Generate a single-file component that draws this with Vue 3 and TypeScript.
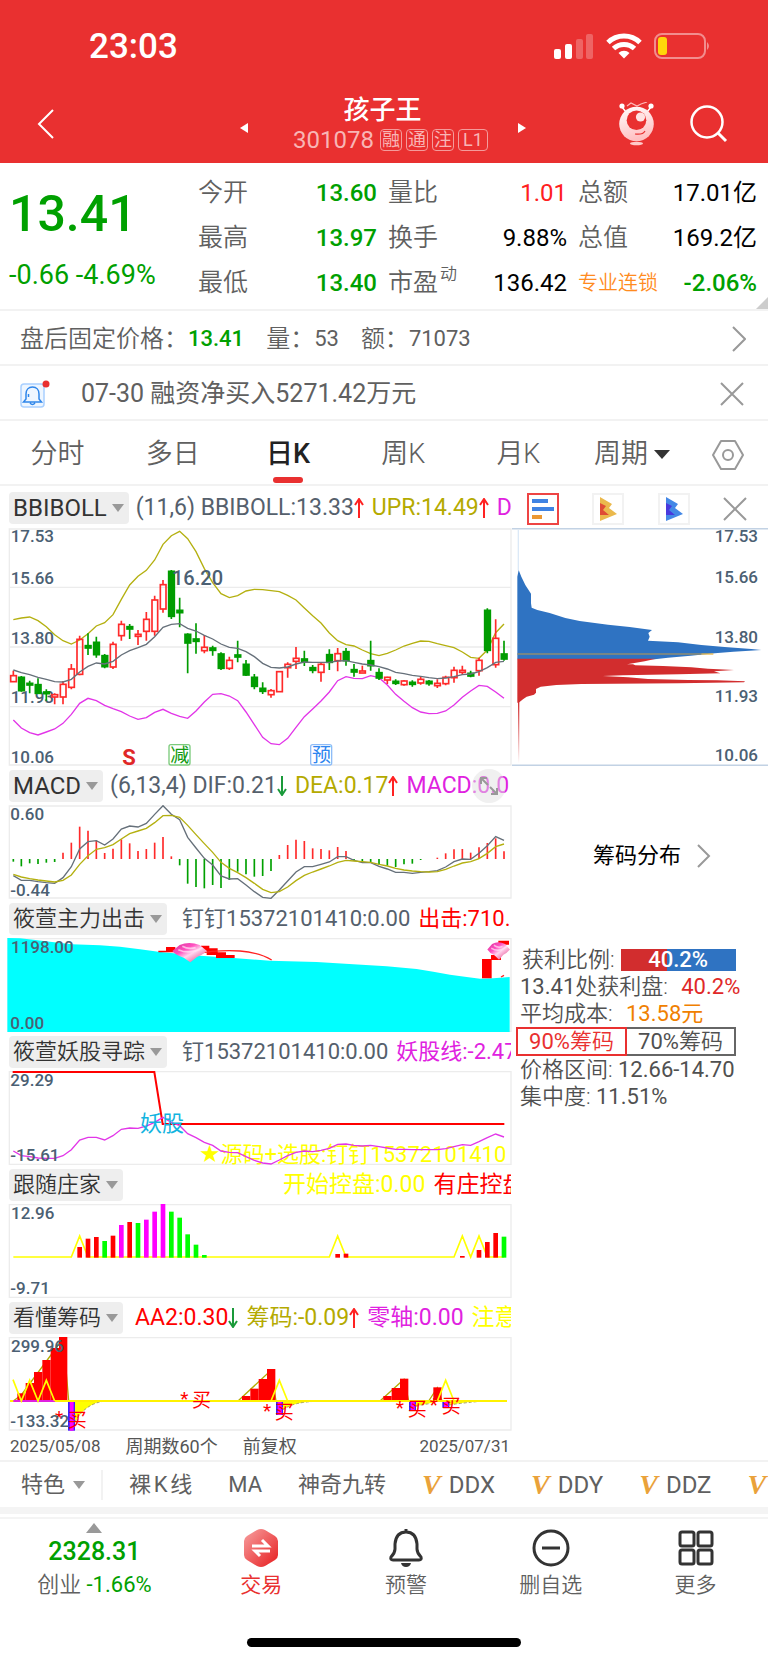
<script setup lang="ts">
import { ref } from 'vue'

type Tone = 'slate' | 'olive' | 'pink' | 'red' | 'yellow'
interface Reading { text: string; tone: Tone; trend?: 'up' | 'down' }
type Candle = [kind: 'r' | 'g', high: number, low: number, top: number, bottom: number]
type Bar = [slot: number, tone: 'r' | 'g' | 'm', top: number]

const periods = ['分时', '多日', '日K', '周K', '月K']
const activePeriod = ref('日K')
const chipRange = ref(90)

const stats = [
  { label: '今开', value: '13.60', tone: 'fall' },
  { label: '量比', value: '1.01', tone: 'rise' },
  { label: '总额', value: '17.01亿', tone: '' },
  { label: '最高', value: '13.97', tone: 'fall' },
  { label: '换手', value: '9.88%', tone: '' },
  { label: '总值', value: '169.2亿', tone: '' },
  { label: '最低', value: '13.40', tone: 'fall' },
  { label: '市盈', mark: '动', value: '136.42', tone: '' },
  { label: '专业连锁', sector: true, value: '-2.06%', tone: 'fall' },
]

const readings: Record<string, Reading[]> = {
  boll: [
    { text: '(11,6) BBIBOLL:13.33', tone: 'slate', trend: 'up' },
    { text: 'UPR:14.49', tone: 'olive', trend: 'up' },
    { text: 'D', tone: 'pink' },
  ],
  macd: [
    { text: '(6,13,4) DIF:0.21', tone: 'slate', trend: 'down' },
    { text: 'DEA:0.17', tone: 'olive', trend: 'up' },
    { text: 'MACD:0.0', tone: 'pink' },
  ],
  force: [
    { text: '钉钉15372101410:0.00', tone: 'slate' },
    { text: '出击:710.', tone: 'red' },
  ],
  hunt: [
    { text: '钉15372101410:0.00', tone: 'slate' },
    { text: '妖股线:-2.47', tone: 'pink' },
  ],
  follow: [
    { text: '开始控盘:0.00', tone: 'yellow' },
    { text: '有庄控盘', tone: 'red' },
  ],
  chips: [
    { text: 'AA2:0.30', tone: 'red', trend: 'down' },
    { text: '筹码:-0.09', tone: 'olive', trend: 'up' },
    { text: '零轴:0.00', tone: 'pink' },
    { text: '注意', tone: 'yellow' },
  ],
}

/* Chart units are thirds of a pixel at the base width. */
const slotX = (i: number) => Math.round(39.5 + 24.95 * i)
const line = (ys: number[]) => ys.map((y, i) => `${slotX(i)},${y}`).join(' ')

const upper = [299, 294, 291, 302, 320, 344, 362, 372, 360, 341, 318, 308, 284, 238, 195, 169, 151, 120, 73, 47, 34, 56, 95, 146, 188, 221, 233, 227, 213, 208, 209, 212, 215, 226, 240, 264, 287, 309, 339, 362, 374, 378, 390, 401, 407, 400, 390, 378, 370, 363, 364, 371, 377, 383, 396, 412, 415, 390, 338, 312]
const middle = [450, 458, 464, 472, 478, 485, 486, 478, 456, 439, 429, 432, 424, 405, 392, 383, 373, 350, 322, 313, 311, 325, 333, 346, 357, 372, 382, 385, 395, 410, 430, 442, 444, 441, 432, 426, 427, 427, 427, 423, 422, 427, 432, 435, 440, 447, 457, 461, 466, 469, 473, 476, 474, 470, 464, 462, 455, 443, 427, 424]
const lower = [600, 624, 638, 645, 636, 627, 610, 583, 550, 535, 542, 556, 566, 575, 588, 598, 593, 577, 568, 580, 589, 595, 573, 546, 523, 521, 528, 542, 576, 614, 652, 671, 674, 655, 622, 590, 567, 543, 516, 482, 470, 475, 476, 467, 473, 495, 523, 544, 563, 576, 581, 580, 573, 555, 532, 513, 496, 499, 516, 535]

const candles: Candle[] = [
  ['r', 452, 485, 467, 485], ['g', 468, 515, 472, 512], ['g', 482, 520, 490, 495], ['g', 475, 520, 494, 520],
  ['g', 508, 542, 516, 521], ['r', 520, 553, 524, 531], ['r', 483, 553, 493, 531], ['r', 432, 508, 447, 502],
  ['r', 347, 466, 358, 463], ['g', 340, 405, 377, 384], ['g', 350, 413, 367, 404], ['g', 402, 445, 407, 440],
  ['r', 365, 447, 373, 441], ['r', 302, 362, 313, 347], ['g', 312, 357, 320, 327], ['r', 330, 375, 343, 349],
  ['r', 276, 362, 298, 334], ['r', 227, 347, 240, 334], ['r', 180, 278, 194, 267], ['g', 150, 297, 154, 289],
  ['g', 233, 322, 271, 278], ['g', 340, 460, 343, 369], ['g', 310, 401, 357, 364], ['r', 345, 400, 382, 392],
  ['g', 377, 407, 384, 391], ['g', 397, 450, 402, 445], ['r', 410, 450, 421, 445], ['g', 362, 427, 405, 411],
  ['g', 420, 468, 433, 465], ['g', 462, 508, 472, 499], ['g', 487, 522, 505, 514], ['r', 507, 533, 512, 524],
  ['r', 455, 515, 455, 515], ['r', 427, 473, 433, 443], ['r', 381, 447, 415, 424], ['g', 392, 438, 417, 424],
  ['g', 435, 460, 443, 451], ['r', 427, 485, 433, 457], ['g', 388, 450, 404, 427], ['r', 384, 454, 401, 422],
  ['g', 384, 437, 395, 422], ['g', 432, 470, 449, 456], ['r', 437, 459, 453, 459], ['g', 362, 452, 422, 437],
  ['g', 445, 480, 458, 474], ['r', 470, 492, 472, 480], ['g', 478, 495, 484, 490], ['r', 480, 497, 483, 494],
  ['g', 481, 500, 487, 493], ['r', 470, 494, 478, 489], ['g', 480, 497, 484, 491], ['r', 478, 504, 490, 497],
  ['r', 467, 496, 472, 491], ['r', 440, 488, 451, 473], ['r', 437, 465, 451, 457], ['g', 452, 472, 460, 468],
  ['r', 413, 467, 421, 452], ['g', 265, 400, 271, 391], ['r', 298, 443, 355, 434], ['g', 362, 422, 402, 417],
]

const macdBars = [290, 304, 295, 297, 293, 291, 263, 233, 185, 197, 227, 264, 251, 223, 235, 258, 252, 233, 216, 274, 301, 356, 366, 370, 360, 369, 345, 320, 328, 335, 333, 318, 270, 240, 224, 228, 250, 252, 256, 246, 258, 287, 291, 294, 299, 302, 306, 298, 296, 285, 282, 278, 265, 253, 252, 263, 247, 234, 220, 259]
const dif = [332, 346, 346, 350, 353, 355, 338, 305, 252, 230, 227, 240, 222, 192, 183, 186, 175, 148, 122, 148, 164, 217, 249, 280, 300, 333, 342, 341, 360, 380, 397, 400, 375, 348, 321, 305, 305, 298, 291, 275, 275, 286, 293, 293, 304, 312, 322, 322, 325, 322, 320, 317, 306, 290, 282, 283, 265, 242, 215, 226]
const dea = [328, 336, 341, 345, 348, 351, 346, 330, 298, 272, 253, 248, 239, 222, 206, 198, 190, 173, 152, 151, 157, 181, 209, 236, 262, 292, 310, 323, 338, 355, 373, 383, 380, 366, 347, 331, 321, 312, 303, 292, 286, 288, 290, 292, 298, 303, 310, 315, 318, 320, 321, 320, 313, 303, 294, 290, 281, 265, 245, 237]
const hunt = [348, 362, 365, 369, 370, 370, 362, 344, 315, 307, 307, 315, 302, 283, 279, 280, 273, 262, 247, 262, 272, 296, 308, 322, 331, 348, 352, 353, 365, 376, 384, 387, 375, 362, 352, 348, 350, 346, 340, 328, 327, 331, 333, 331, 335, 339, 343, 343, 344, 344, 344, 344, 341, 335, 329, 331, 320, 308, 297, 306]

const followBars: Bar[] = [
  [8, 'r', 636], [9, 'r', 611], [10, 'r', 606], [11, 'g', 618], [12, 'r', 602], [13, 'm', 570], [14, 'r', 561], [15, 'g', 564],
  [16, 'm', 554], [17, 'm', 530], [18, 'm', 506], [19, 'g', 530], [20, 'g', 548], [21, 'g', 598], [22, 'g', 629], [23, 'g', 660],
  [39, 'r', 657], [40, 'r', 656], [54, 'r', 663], [56, 'r', 645], [57, 'r', 621], [58, 'r', 594], [59, 'g', 605],
]
const followPeaks = [8, 39, 54, 56]
const followLine = line(Array.from({ length: 60 }, (_, i) => (followPeaks.includes(i) ? 603 : 666)))

const chipBars = [
  [1, 295], [2, 264], [3, 231], [4, 195], [5, 159], [6, 123],
  [28, 303], [29, 281], [30, 252], [31, 222],
  [45, 303], [46, 279], [47, 251], [51, 277],
]
const chipDrops = [[7, 407], [32, 360], [48, 348], [52, 338]]
const buys = [[165, 378, 203, 395], [541, 320, 576, 337], [789, 356, 824, 373], [1187, 347, 1223, 364], [1289, 338, 1325, 354]]

const extras = ['裸K线', 'MA', '神奇九转']
const premium = ['DDX', 'DDY', 'DDZ', '']
</script>

<template>
  <main class="app">
    <header class="top">
      <div class="status">
        <time class="clock">23:03</time>
        <svg class="status-icons" viewBox="0 0 160 28" width="160" height="28" aria-hidden="true">
          <g fill="#fff">
            <rect x="1" y="17" width="7" height="10" rx="2" />
            <rect x="12" y="12" width="7" height="15" rx="2" />
            <g opacity=".25">
              <rect x="23" y="7" width="7" height="20" rx="2" />
              <rect x="33" y="2" width="7" height="25" rx="2" />
            </g>
            <path d="M71 26.500l-5.500-5.500a8 8 0 0 1 11 0z" />
          </g>
          <path d="M55 10.500a23 23 0 0 1 32 0M60.500 16.500a15.500 15.500 0 0 1 21 0" fill="none" stroke="#fff" stroke-width="5" />
          <rect x="102" y="2" width="50" height="24" rx="7" fill="none" stroke="#f28d8e" stroke-width="2" />
          <path d="M154 10q4 4 0 8z" fill="#f28d8e" />
          <rect x="105" y="5" width="9" height="18" rx="3" fill="#ffd60a" />
        </svg>
      </div>
      <div class="title-bar">
        <button class="icon-btn" aria-label="返回">
          <svg width="18" height="30" viewBox="0 0 18 30"><path d="M16 1L2 15l14 14" fill="none" stroke="#fff" stroke-width="2" /></svg>
        </button>
        <div class="stock">
          <button class="icon-btn" aria-label="上一只"><svg width="8" height="12" viewBox="0 0 8 12"><path d="M8 1v10L0 6z" fill="#fff" /></svg></button>
          <div class="stock-name">
            <h1>孩子王</h1>
            <p class="code">301078 <span class="tag">融</span><span class="tag">通</span><span class="tag">注</span><span class="tag wide">L1</span></p>
          </div>
          <button class="icon-btn" aria-label="下一只"><svg width="8" height="12" viewBox="0 0 8 12"><path d="M0 1v10l8-5z" fill="#fff" /></svg></button>
        </div>
        <div class="actions">
          <button class="icon-btn" aria-label="智能助手">
            <svg width="38" height="44" viewBox="0 0 38 44">
              <defs><linearGradient id="bot" x2=".3" y2="1"><stop offset="0" stop-color="#fff" /><stop offset="1" stop-color="#ffc0c2" /></linearGradient></defs>
              <path d="M4 5l4 5M33 5l-4 5" fill="none" stroke="#fff" stroke-width="1.500" />
              <path d="M9 4l4-3 6 3 4-2 6-2" fill="none" stroke="#ffb9b9" stroke-width="1.200" />
              <circle cx="4" cy="4" r="2.600" fill="#fff" /><circle cx="33" cy="4" r="2.600" fill="#fff" />
              <circle cx="18.500" cy="22" r="17.300" fill="url(#bot)" />
              <circle cx="18.500" cy="18.300" r="9.800" fill="#e93030" />
              <circle cx="22.500" cy="15" r="4.600" fill="#ffe3e3" />
              <path d="M17 32q8 1 10-3" fill="none" stroke="#e93030" stroke-width="1.200" />
              <ellipse cx="18.500" cy="41.500" rx="6.500" ry="1.800" fill="#ffc9c9" />
            </svg>
          </button>
          <button class="icon-btn" aria-label="搜索">
            <svg width="38" height="38" viewBox="0 0 38 38"><circle cx="17" cy="17" r="15.500" fill="none" stroke="#fff" stroke-width="2.500" /><path d="M28 28l8 8" stroke="#fff" stroke-width="3" /></svg>
          </button>
        </div>
      </div>
    </header>

    <section class="quote">
      <div class="price">
        <strong>13.41</strong>
        <span>-0.66 -4.69%</span>
      </div>
      <dl class="stats">
        <div v-for="s in stats" :key="s.label">
          <dt :class="{ sector: s.sector }">{{ s.label }}<sup v-if="s.mark">{{ s.mark }}</sup></dt>
          <dd :class="s.tone">{{ s.value }}</dd>
        </div>
      </dl>
      <svg class="corner" width="12" height="12" viewBox="0 0 12 12" aria-hidden="true"><path d="M12 0v12H0z" fill="#ccc" /></svg>
    </section>

    <section class="row after">
      <span>盘后固定价格：</span><b class="fall">13.41</b>
      <span>量：</span><b>53</b>
      <span>额：</span><b>71073</b>
      <button class="icon-btn end" aria-label="展开"><svg width="14" height="26" viewBox="0 0 14 26"><path d="M1 1l12 12L1 25" fill="none" stroke="#999" stroke-width="2" /></svg></button>
    </section>

    <section class="row notice">
      <svg width="30" height="28" viewBox="0 0 30 28" aria-hidden="true">
        <rect x="1" y="4" width="23" height="23" rx="3" fill="#eef6ff" stroke="#a9d0ff" stroke-width="1.500" />
        <path d="M3.500 22h18l-2.500-3v-5c0-4-2.500-7-6.500-7S6 10 6 14v5zM10 23q2.500 3 5 0M8.500 17v-3" fill="none" stroke="#2f86ea" stroke-width="1.500" />
        <circle cx="26" cy="4" r="3.500" fill="#e93030" />
      </svg>
      <p>07-30 融资净买入5271.42万元</p>
      <button class="icon-btn end" aria-label="关闭"><svg width="24" height="24" viewBox="0 0 24 24"><path d="M1 1l22 22M23 1L1 23" stroke="#999" stroke-width="2" /></svg></button>
    </section>

    <nav class="periods" aria-label="周期">
      <button v-for="p in periods" :key="p" :class="{ active: p === activePeriod }" @click="activePeriod = p">{{ p }}</button>
      <button class="more-period">周期<svg width="16" height="9" viewBox="0 0 16 9" aria-hidden="true"><path d="M0 0h16L8 9z" fill="#333" /></svg></button>
      <button aria-label="设置"><svg width="32" height="30" viewBox="0 0 32 30"><path d="M9 1h14l8 14-8 14H9L1 15z" fill="none" stroke="#999" stroke-width="2" stroke-linejoin="round" /><circle cx="16" cy="15" r="5" fill="none" stroke="#999" stroke-width="2" /></svg></button>
    </nav>

    <section class="charts">
      <div class="left">
        <div class="head first">
          <button class="pick latin">BBIBOLL<i></i></button>
          <p class="vals boll">
            <span v-for="r in readings.boll" :key="r.text" :class="r.tone">{{ r.text }}<svg v-if="r.trend" :class="['arrow', r.trend]" width="10" height="20" viewBox="0 0 10 20"><path d="M5 20V1M1 7l4-6 4 6" /></svg></span>
          </p>
        </div>
        <svg class="plot" viewBox="0 24 1536 714" role="img" aria-label="日K线">
          <path d="M28 27H1533V735H28zM28 202H1533M28 381H1533M28 560H1533" class="frame" />
          <polyline :points="line(upper)" class="ln o" />
          <polyline :points="line(lower)" class="ln p" />
          <text class="axis" x="32" y="66">17.53</text>
          <text class="axis" x="32" y="192">15.66</text>
          <text class="axis" x="32" y="371">13.80</text>
          <text class="axis" x="32" y="549">11.93</text>
          <text class="axis" x="32" y="728">10.06</text>
          <g v-for="(c, i) in candles" :key="i" :class="c[0] === 'r' ? 'up-candle' : 'down-candle'">
            <path :d="`M${slotX(i)} ${c[1]}V${c[3]}M${slotX(i)} ${c[4]}V${c[2]}`" />
            <rect :x="slotX(i) - 8" :y="c[3]" width="17" :height="c[4] - c[3]" />
          </g>
          <polyline :points="line(middle)" class="ln s" />
          <text class="peak" x="516" y="194">16.20</text>
          <text class="sell" x="367" y="734">S</text>
          <g class="badge green"><rect x="507" y="674" width="63" height="61" rx="6" /><text x="511" y="725">减</text></g>
          <g class="badge blue"><rect x="932" y="674" width="63" height="61" rx="6" /><text x="936" y="725">预</text></g>
        </svg>

        <div class="head">
          <button class="pick latin">MACD<i></i></button>
          <p class="vals boll">
            <span v-for="r in readings.macd" :key="r.text" :class="r.tone">{{ r.text }}<svg v-if="r.trend" :class="['arrow', r.trend]" width="10" height="20" viewBox="0 0 10 20"><path d="M5 20V1M1 7l4-6 4 6" /></svg></span>
          </p>
          <button class="expand" aria-label="全屏"><svg width="20" height="20" viewBox="0 0 20 20"><path d="M2 8V2h6M3 3l6 6M18 12v6h-6M17 17l-6-6" fill="none" stroke="#999" stroke-width="2" /></svg></button>
        </div>
        <svg class="plot" viewBox="0 120 1536 282" role="img" aria-label="MACD">
          <path d="M28 123H1533V399H28z" class="frame" />
          <path v-for="(y, i) in macdBars" :key="i" :d="`M${slotX(i)} 282V${y}`" :stroke="y < 282 ? '#ff2a2a' : '#00a000'" stroke-width="5" />
          <polyline :points="line(dif)" class="ln s" />
          <polyline :points="line(dea)" class="ln o" />
          <text class="axis" x="31" y="166">0.60</text>
          <text class="axis" x="31" y="393">-0.44</text>
        </svg>

        <div class="head">
          <button class="pick">筱萱主力出击<i></i></button>
          <p class="vals force"><span v-for="r in readings.force" :key="r.text" :class="r.tone">{{ r.text }}</span></p>
        </div>
        <svg class="plot" viewBox="0 519 1536 282" role="img" aria-label="筱萱主力出击">
          <defs>
            <linearGradient id="gem" x2="1" y2="1"><stop offset="0" stop-color="#d8349a" /><stop offset=".35" stop-color="#ff4fc0" /><stop offset=".55" stop-color="#ffd6ef" /><stop offset="1" stop-color="#e0206f" /></linearGradient>
            <g id="diamond">
              <path d="M0 26L22 8Q50-4 82 8L104 26Q90 38 74 44L54 60L34 46Q10 38 0 26z" fill="url(#gem)" />
              <path d="M18 22q36 16 72-6M30 12q18 10 40 4" fill="none" stroke="#ffe6f6" stroke-width="5" opacity=".7" />
            </g>
          </defs>
          <path d="M22 521H1533V799H28" class="frame" />
          <path d="M22 519L60 520L100 524L150 530L215 538L300 541L360 545L420 553L475 560L600 572L700 579L810 587L950 591L1060 598L1160 604L1250 612L1300 620L1350 629L1400 636L1440 641L1480 640L1529 636V801H22z" fill="#0ff" />
          <path d="M475 557h23v-11h28v16h-51zM603 542h25v8h25v12h25v8h26v9h-56v-9h-28v-12h-17zM1446 582h27v-12h30v15h-28v55h-29zM1495 527h32v12h-32z" fill="red" />
          <path d="M580 567Q660 553 720 558T815 585M1503 636l9-5" fill="none" stroke="#f22" stroke-width="4" />
          <use href="#diamond" x="517" y="532" /><use href="#diamond" transform="translate(1462 530) scale(.65 .9)" />
          <text class="axis" x="33" y="564">1198.00</text>
          <text class="axis" x="31" y="791">0.00</text>
        </svg>

        <div class="head">
          <button class="pick">筱萱妖股寻踪<i></i></button>
          <p class="vals force"><span v-for="r in readings.hunt" :key="r.text" :class="r.tone">{{ r.text }}</span></p>
        </div>
        <svg class="plot" viewBox="0 108 1536 282" role="img" aria-label="筱萱妖股寻踪">
          <path d="M28 110H1533V388H28z" class="frame" />
          <text class="note ad" x="597" y="380"><tspan class="star">★</tspan>源码+选股:钉钉15372101410</text>
          <path d="M38 111H463L488 267H1513" fill="none" stroke="red" stroke-width="6" />
          <polyline :points="line(hunt)" class="ln p" />
          <text class="note cyan" x="420" y="288">妖股</text>
          <text class="axis" x="31" y="153">29.29</text>
          <text class="axis" x="31" y="379">-15.61</text>
        </svg>

        <div class="head">
          <button class="pick">跟随庄家<i></i></button>
          <p class="vals follow"><span v-for="r in readings.follow" :key="r.text" :class="r.tone">{{ r.text }}</span></p>
        </div>
        <svg class="plot" viewBox="0 507 1536 282" role="img" aria-label="跟随庄家">
          <path d="M28 509H1533V787H28z" class="frame" />
          <polyline :points="followLine" fill="none" stroke="#ff0" stroke-width="5" />
          <rect v-for="b in followBars" :key="b[0]" :x="slotX(b[0]) - 7" :y="b[2]" width="14" :height="668 - b[2]" :class="'bar-' + b[1]" />
          <text class="axis" x="33" y="552">12.96</text>
          <text class="axis" x="31" y="778">-9.71</text>
        </svg>

        <div class="head">
          <button class="pick">看懂筹码<i></i></button>
          <p class="vals chips">
            <span v-for="r in readings.chips" :key="r.text" :class="r.tone">{{ r.text }}<svg v-if="r.trend" :class="['arrow', r.trend]" width="10" height="20" viewBox="0 0 10 20"><path d="M5 20V1M1 7l4-6 4 6" /></svg></span>
          </p>
        </div>
        <svg class="plot" viewBox="0 126 1536 282" role="img" aria-label="看懂筹码">
          <path d="M28 128H1533V405H28z" class="frame" />
          <path d="M40 318L64 300L164 165L190 126L206 318M714 318L813 226L828 318M1140 318L1212 253L1226 318M1286 318L1312 278L1326 318" fill="none" stroke="#b4aa00" stroke-width="4" />
          <rect v-for="b in chipBars" :key="b[0]" :x="slotX(b[0]) - 12" :y="b[1]" width="25" :height="318 - b[1]" fill="red" />
          <path d="M224 318V382Q245 345 275 330T340 318M848 318V345Q865 332 890 326T960 318M1247 318V334Q1270 328 1326 318M1347 318V330Q1370 326 1430 318" fill="#ff0" />
          <path d="M224 382Q245 345 275 330T340 318M848 345Q865 332 890 326T960 318M1247 334Q1270 328 1290 326M1347 330Q1370 326 1430 320" fill="none" stroke="#a8a060" stroke-width="3" stroke-dasharray="9 6" />
          <path d="M30 318H1521" stroke="#fff200" stroke-width="6" />
          <path d="M40 318H165" stroke="#e020e0" stroke-width="6" />
          <g v-for="d in chipDrops" :key="d[0]"><rect :x="slotX(d[0]) - 10" y="321" width="21" :height="d[1] - 321" fill="#3a20ff" /><rect :x="slotX(d[0]) - 5" y="321" width="12" :height="d[1] - 321" fill="#f0f" /></g>
          <path d="M39 254L64 318L89 256L114 318L139 256L164 318M813 318L838 256L863 318M1312 318L1337 256L1362 318" fill="none" stroke="#ff0" stroke-width="5" />
          <g v-for="b in buys" :key="b[0]" class="buy"><text :x="b[0]" :y="b[1] + 10">*</text><text :x="b[2]" :y="b[3]">买</text></g>
          <text class="axis" x="33" y="170">299.96</text>
          <text class="axis" x="31" y="396">-133.32</text>
        </svg>
        <footer class="dates"><span>2025/05/08</span><span class="zh">周期数60个</span><span class="zh">前复权</span><span class="end">2025/07/31</span></footer>
      </div>

      <aside class="right">
        <div class="tools">
          <button class="tool on" aria-label="筹码"><svg width="24" height="24" viewBox="0 0 24 24"><path d="M1 4h16M1 12h22" stroke="#3f83e3" stroke-width="4" /><path d="M1 20h10" stroke="#eb9833" stroke-width="4" /></svg></button>
          <button class="tool" aria-label="成本"><svg width="18" height="24" viewBox="0 0 18 24"><path d="M1 0l12 7-3 4 8 6-17 7z" fill="#ebb94c" /><path d="M1 6l6 3-3 4 6 5H1z" fill="#df4c35" /></svg></button>
          <button class="tool" aria-label="变化"><svg width="18" height="24" viewBox="0 0 18 24"><path d="M1 0l12 7-3 4 8 6-17 7z" fill="#4488e6" /><path d="M1 6l6 3-3 4 6 5H1z" fill="#4939dd" /></svg></button>
          <button class="icon-btn" aria-label="关闭筹码"><svg width="24" height="24" viewBox="0 0 24 24"><path d="M1 1l22 22M23 1L1 23" stroke="#999" stroke-width="2" /></svg></button>
        </div>
        <svg class="plot" viewBox="12 144 768 714" role="img" aria-label="筹码分布">
          <defs><linearGradient id="tail" x2="0" y2="1"><stop offset="0" stop-color="#d22d2e" /><stop offset="1" stop-color="#d22d2e" stop-opacity="0" /></linearGradient></defs>
          <path d="M12 146H780M12 856H780" stroke="#c2d2e4" stroke-width="5" />
          <path d="M31 150V270" stroke="#dce9f7" stroke-width="4" />
          <rect x="30" y="664" width="4" height="186" fill="url(#tail)" />
          <path d="M28 290L32 270L40 290L52 315L69 341V370L71 383L88 390L125 399L172 414L215 423L300 434L365 441L432 450L421 459L425 470L420 482L510 487L580 495L650 501L730 507L760 510L676 515L620 520L548 527L480 533L440 538H28z" fill="#2f73c2" />
          <path d="M28 536H444L410 544L375 550L357 553H375L382 556L465 558L550 562L600 566L678 570L618 574L637 580L512 583L345 586L284 588L360 592L420 597L540 600L627 601L711 604L708 607L512 610L220 612L145 615L98 620L84 627V638L78 644L56 650L45 658L32 668H28z" fill="#d22d2e" />
          <path d="M28 522H580" stroke="#8f8d73" stroke-width="4" />
          <path d="M580 522H616" stroke="#e8b84a" stroke-width="4" />
          <text class="axis" x="750" y="185" text-anchor="end">17.53</text>
          <text class="axis" x="750" y="309" text-anchor="end">15.66</text>
          <text class="axis" x="750" y="488" text-anchor="end">13.80</text>
          <text class="axis" x="750" y="666" text-anchor="end">11.93</text>
          <text class="axis" x="750" y="843" text-anchor="end">10.06</text>
        </svg>
        <a class="chip-link" href="#chips">筹码分布<svg width="14" height="24" viewBox="0 0 14 24" aria-hidden="true"><path d="M1 1l11 11L1 23" fill="none" stroke="#999" stroke-width="2" /></svg></a>
        <div class="chip-info">
          <p class="profit">获利比例:<span class="meter">40.2%</span></p>
          <p><b>13.41</b>处获利盘: <b class="red-value">40.2%</b></p>
          <p>平均成本: <b class="amber">13.58元</b></p>
          <div class="switch">
            <button v-for="n in [90, 70]" :key="n" :class="{ on: chipRange === n }" @click="chipRange = n"><b>{{ n }}%</b>筹码</button>
          </div>
          <p>价格区间: <b>12.66-14.70</b></p>
          <p>集中度: <b>11.51%</b></p>
        </div>
      </aside>
    </section>

    <section class="extras">
      <button class="feature">特色<i></i></button>
      <button v-for="e in extras" :key="e">{{ e }}</button>
      <button v-for="(e, i) in premium" :key="i" class="vip"><em>V</em>{{ e }}</button>
    </section>

    <nav class="bottom" aria-label="操作">
      <a href="#index" class="index">
        <svg width="16" height="10" viewBox="0 0 16 10" aria-hidden="true"><path d="M8 0l8 10H0z" fill="#999" /></svg>
        <b class="fall">2328.31</b>
        <span>创业 <b class="fall">-1.66%</b></span>
      </a>
      <a href="#trade" class="trade">
        <svg width="36" height="40" viewBox="0 0 36 40">
          <defs><linearGradient id="hex" x2="1" y2="1"><stop offset="0" stop-color="#f7a0a0" /><stop offset="1" stop-color="#e71c1e" /></linearGradient></defs>
          <path d="M18 1q2 0 4 1l10 6q3 2 3 5v14q0 3-3 5l-10 6q-4 2-8 0L4 32q-3-2-3-5V13q0-3 3-5l10-6q2-1 4-1z" fill="url(#hex)" />
          <path d="M9 18h16l-6-6M27 23H12l5 5" fill="none" stroke="#fff" stroke-width="3" />
        </svg>交易
      </a>
      <a href="#alert">
        <svg width="36" height="40" viewBox="0 0 36 40"><path d="M18 1v3M5 32q-3 0-2-3 4-4 4-8v-5Q8 4 18 4t11 12v5q0 4 4 8 1 3-2 3z" fill="none" stroke="#333" stroke-width="3" stroke-linejoin="round" /><path d="M13 35h10q-1 4-5 4t-5-4z" fill="#333" /></svg>预警
      </a>
      <a href="#remove">
        <svg width="38" height="40" viewBox="0 0 38 40"><circle cx="19" cy="20" r="17" fill="none" stroke="#333" stroke-width="3" /><path d="M10 20h18" stroke="#333" stroke-width="3" /></svg>删自选
      </a>
      <a href="#more">
        <svg width="36" height="40" viewBox="0 0 36 40"><g fill="none" stroke="#333" stroke-width="3"><rect x="2" y="4" width="14" height="14" rx="2" /><rect x="20" y="4" width="14" height="14" rx="2" /><rect x="2" y="22" width="14" height="14" rx="2" /><rect x="20" y="22" width="14" height="14" rx="2" /></g></svg>更多
      </a>
    </nav>
    <div class="home"></div>
  </main>
</template>

<style>
body { background: #fff; }
</style>

<style scoped>
* { box-sizing: border-box; margin: 0; padding: 0; }
.app { font-family: Roboto, "Noto Sans CJK SC", sans-serif; color: #606060; font-size: 22px; line-height: 1; overflow: hidden; font-weight: 350; }
button { font: inherit; color: inherit; background: none; border: 0; cursor: pointer; white-space: nowrap; }
a { color: inherit; text-decoration: none; }
b { font-weight: 400; }
svg { display: block; flex: none; }
.icon-btn { display: flex; align-items: center; }
.end { margin-left: auto; }
.fall { color: #00a000; }
.rise { color: #ff2020; }

.top { background: #e93030; color: #fff; }
.status { display: flex; justify-content: space-between; align-items: flex-start; padding: 32px 55px 0 89px; height: 90px; }
.clock { font: 500 35px/30px Roboto, sans-serif; }
.title-bar { display: grid; grid-template-columns: 1fr 286px 1fr; align-items: center; height: 73px; padding: 0 40px 6px 37px; }
.stock { display: flex; align-items: center; justify-content: space-between; }
.stock > .icon-btn { padding-top: 8px; }
.stock-name { text-align: center; }
h1 { font-size: 26px; line-height: 32px; font-weight: 500; }
.code { display: flex; align-items: center; gap: 4px; font-size: 24px; line-height: 28px; padding-left: 8px; margin-right: -8px; color: #f8b5b5; font-weight: 400; }
.tag { border: 1px solid #f49b9b; border-radius: 4px; font-size: 18px; line-height: 20px; width: 22px; text-align: center; }
.tag:first-child { margin-left: 2px; }
.tag.wide { width: 30px; }
.actions { display: flex; justify-content: flex-end; align-items: center; gap: 34px; }

.quote { position: relative; display: flex; padding: 7px 11px 4px 9px; border-bottom: 2px solid #f2f2f2; height: 148px; }
.price { width: 189px; flex: none; color: #00a000; display: flex; flex-direction: column; }
.price strong { font-size: 50px; line-height: 56px; font-weight: 500; padding-top: 16px; }
.price span { font-size: 27px; line-height: 32px; font-weight: 400; padding-top: 17px; }
.stats { flex: 1; display: grid; grid-template-columns: repeat(3, 1fr); column-gap: 11px; grid-auto-rows: 45px; }
.stats div { display: flex; justify-content: space-between; align-items: center; font-size: 25px; }
dt { display: flex; align-items: center; white-space: nowrap; }
dt sup { font-size: 17px; padding: 0 0 16px 2px; }
dt.sector { font-size: 20px; color: #ff8b1e; }
dd { color: #000; font-size: 24px; font-weight: 400; white-space: nowrap; }
dd.fall { color: #00a000; font-weight: 500; }
dd.rise { color: #ff2020; }
.corner { position: absolute; right: 0; bottom: 0; }

.row { display: flex; align-items: center; height: 55px; border-bottom: 2px solid #f2f2f2; padding: 2px 22px 0 20px; font-size: 24px; }
.after b { margin-right: 22px; font-size: 22px; }
.after .fall { font-weight: 500; }
.row .end { margin-right: 0; }
.notice { padding-right: 24px; font-size: 25px; font-weight: 400; gap: 31px; }

.periods { display: grid; grid-template-columns: repeat(5, 72fr) 70fr 50fr; height: 65px; border-bottom: 2px solid #f2f2f2; }
.periods button { position: relative; font-size: 27px; display: flex; align-items: center; justify-content: center; gap: 6px; padding-top: 4px; }
.periods .active { color: #222; font-weight: 500; }
.periods .active::after { content: ""; position: absolute; bottom: 1px; width: 30px; height: 6px; border-radius: 3px; background: #e93030; }

.charts { display: grid; grid-template-columns: minmax(0, 2fr) minmax(0, 1fr); border-bottom: 2px solid #f2f2f2; }
.left { min-width: 0; }
.plot { width: 100%; height: auto; }
.head { position: relative; display: flex; align-items: center; height: 39px; padding: 0 1px 0 9px; }
.head.first { height: 42px; padding-top: 2px; }
.pick { display: flex; align-items: center; gap: 5px; height: 32px; padding: 0 5px 0 4px; background: #eee; border-radius: 4px; color: #333; flex: none; font-size: 22px; }
.pick.latin { font-size: 24px; font-weight: 400; }
.pick i, .feature i { border: 6px solid transparent; border-top: 8px solid #999; border-bottom: 0; }
.vals { flex: 1; min-width: 0; display: flex; gap: 8px; overflow: hidden; white-space: nowrap; line-height: 32px; font-weight: 400; font-size: 23px; }
.vals span { display: flex; align-items: center; flex: none; }
.vals.boll { padding-left: 7px; }
.vals.force { padding-left: 15px; font-size: 22px; }
.vals.follow { padding-left: 160px; }
.vals.chips { padding-left: 12px; }
.slate { color: #55606c; }
.olive { color: #b4aa00; }
.pink { color: #e022e0; }
.red { color: red; }
.yellow { color: #ff0; }
.arrow path { fill: none; stroke: #f22; stroke-width: 2; }
.arrow.down { transform: rotate(180deg); }
.arrow.down path { stroke: #1a9a3a; }
.expand { position: absolute; right: 6px; top: 3px; width: 34px; height: 34px; border-radius: 50%; background: rgba(225, 225, 225, .5); display: flex; align-items: center; justify-content: center; }
.frame { fill: none; stroke: #ececec; stroke-width: 4; }
.ln { fill: none; stroke-width: 4; }
.ln.o { stroke: #b4b010; }
.ln.s { stroke: #66707a; }
.ln.p { stroke: #e235e8; }
.axis { font-size: 51px; fill: #4b6073; font-weight: 500; }
.peak { font-size: 60px; fill: #4b6073; font-weight: 500; }
.sell { font-size: 66px; fill: #e02828; font-weight: 700; }
.up-candle path, .up-candle rect { stroke: #ff2a2a; stroke-width: 5; fill: none; }
.down-candle path, .down-candle rect { stroke: #009c00; stroke-width: 5; fill: #009c00; }
.badge rect { fill: #fff; stroke-width: 4; }
.badge text { font-size: 57px; font-weight: 400; }
.green rect { stroke: #7ccb7c; } .green text { fill: #109a10; }
.blue rect { stroke: #8fbcf7; } .blue text { fill: #2f86f0; }
.note { font-size: 66px; font-weight: 400; }
.note.ad { fill: #ff0; }
.star { font-family: "DejaVu Sans", sans-serif; font-size: 72px; }
.note.cyan { fill: #12b4e0; }
.bar-r { fill: red; } .bar-g { fill: #0f0; } .bar-m { fill: #f0f; }
.buy text { font-size: 57px; fill: red; font-weight: 400; }
.dates { display: flex; padding: 2px 2px 0 10px; height: 29px; align-items: center; font-size: 17px; font-weight: 400; gap: 25px; color: #555; }
.dates .zh { font-size: 18px; }

.tools { display: flex; align-items: center; justify-content: space-between; height: 42px; padding: 3px 21px 0 15px; }
.tool { width: 32px; height: 32px; border: 2px solid #f2f2f2; display: flex; align-items: center; justify-content: center; }
.tool.on { border-color: #ee4444; }
.chip-link { display: flex; align-items: center; justify-content: center; gap: 16px; padding: 77px 0 0 24px; color: #000; font-weight: 400; line-height: 26px; font-size: 22px; }
.chip-info { padding: 77px 0 0 8px; color: #505050; line-height: 27px; white-space: nowrap; }
.chip-info p { height: 27px; }
.profit { display: flex; align-items: center; padding-left: 2px; gap: 6px; }
.meter { width: 115px; line-height: 22px; text-align: center; color: #fff; font-weight: 500; background: linear-gradient(90deg, #d22d2e 40.2%, #2f73c2 40.2%); }
.red-value { color: #e02828; margin-left: 8px; }
.amber { color: #f08000; margin-left: 8px; }
.switch { display: flex; width: 220px; margin: 0 0 0 -4px; height: 29px; }
.switch button { flex: 1; border: 2px solid #666; line-height: 24px; }
.switch .on { border-color: #e93030; color: #e93030; }
.switch button + button { border-left: 0; }

.extras { display: flex; align-items: center; height: 52px; border-bottom: 7px solid #f4f4f4; padding-left: 21px; overflow: hidden; }
.extras button { flex: none; margin-right: 36px; display: flex; align-items: center; text-autospace: normal; font-size: 22px; font-weight: 400; }
.extras .feature { margin-right: 26px; padding-right: 16px; gap: 8px; height: 30px; border-right: 2px solid #f2f2f2; }
.extras .vip { margin-right: 36px; gap: 8px; font-size: 24px; }
.vip em { font: italic 700 28px/26px "Liberation Serif", serif; color: #eaa23a; }
.bottom { display: grid; grid-template-columns: 189fr repeat(4, 145fr); margin-top: 3px; border-top: 2px solid #f4f4f4; height: 121px; }
.bottom a { display: flex; flex-direction: column; align-items: center; gap: 4px; padding-top: 9px; font-size: 21px; line-height: 27px; }
.bottom .index { padding-top: 4px; gap: 4px; }
.index > b { font-size: 25px; line-height: 30px; font-weight: 500; }
.index span { font-size: 22px; }
.trade { color: #e93030; font-weight: 400; }
.home { width: 274px; height: 9px; border-radius: 5px; background: #000; margin: 0 auto 15px; }
</style>
